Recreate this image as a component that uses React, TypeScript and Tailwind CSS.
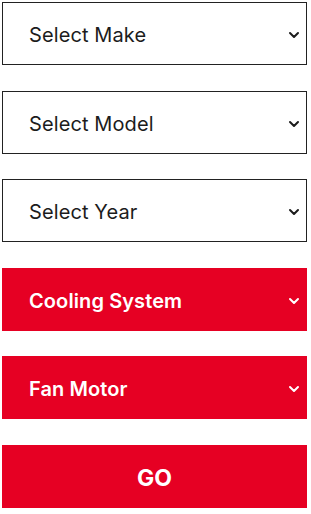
import { ChevronDown } from "lucide-react";

const selects = [
  { label: "Select Make", red: false },
  { label: "Select Model", red: false },
  { label: "Select Year", red: false },
  { label: "Cooling System", red: true },
  { label: "Fan Motor", red: true },
];

export default function App() {
  return (
    <div className="bg-white w-[311px] h-[514px] pt-[2px] pl-[2px] pr-[4px] flex flex-col gap-[25.6px] font-['Inter',sans-serif]">
      {selects.map((s) => (
        <div
          key={s.label}
          className={
            s.red
              ? "h-[63px] flex items-center justify-between bg-[#e60023] text-white font-semibold pl-[27px] pr-[5px] pt-[3px]"
              : "h-[63px] flex items-center justify-between border border-[#222] text-[#1c1c1c] pl-[26px] pr-[4px] pt-[3px]"
          }
        >
          <span className="text-[20px] tracking-[0.1px]">{s.label}</span>
          <ChevronDown className="w-[16px] h-[16px]" strokeWidth={3} />
        </div>
      ))}
      <button className="h-[63px] bg-[#e60023] text-white font-bold text-[23px] flex items-center justify-center pt-[3px]">
        GO
      </button>
    </div>
  );
}
